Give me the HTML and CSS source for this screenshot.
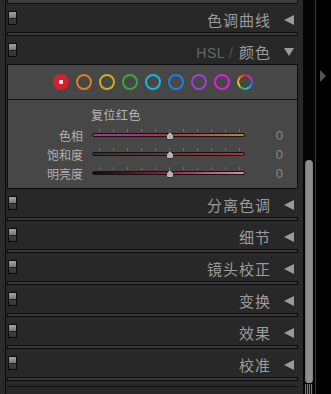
FILE: index.html
```html
<!doctype html>
<html lang="zh-CN">
  <head>
    <meta charset="UTF-8" />
    <title>修改照片 - 面板</title>
    <link rel="stylesheet" href="styles.css">
  </head>
  <body>
    <div class="app">
      <div class="panels">
        <div class="stub"></div>

        <section class="sec">
          <div class="hdr"><span class="switch"></span><span class="title">色调曲线</span><span class="tri"></span></div>
          <div class="bar"></div>
        </section>

        <!-- HSL / 颜色（展开） -->
        <section class="sec">
          <div class="hdr">
            <span class="switch"></span>
            <span class="title"><span class="dim">HSL</span><span class="slash">/</span>颜色</span>
            <span class="tri down"></span>
          </div>
          <div class="box">
            <div class="swatches">
              <span class="dot red active"></span>
              <span class="dot orange"></span>
              <span class="dot yellow"></span>
              <span class="dot green"></span>
              <span class="dot aqua"></span>
              <span class="dot blue"></span>
              <span class="dot purple"></span>
              <span class="dot magenta"></span>
              <span class="dot all"></span>
            </div>
            <div class="adjust">
              <div class="reset">复位红色</div>
              <div class="row">
                <span class="lbl">色相</span>
                <div class="slider">
                  <div class="ticks"></div>
                  <div class="track hue"></div>
                  <svg class="thumb" width="8" height="9" viewBox="0 0 8 9"><path d="M4 0.5 L7.5 4.5 L7.5 7 Q7.5 8.5 6 8.5 L2 8.5 Q0.5 8.5 0.5 7 L0.5 4.5 Z" fill="#b4b4b4" stroke="#222" stroke-width="0.8"/></svg>
                </div>
                <span class="val">0</span>
              </div>
              <div class="row">
                <span class="lbl">饱和度</span>
                <div class="slider">
                  <div class="ticks"></div>
                  <div class="track sat"></div>
                  <svg class="thumb" width="8" height="9" viewBox="0 0 8 9"><path d="M4 0.5 L7.5 4.5 L7.5 7 Q7.5 8.5 6 8.5 L2 8.5 Q0.5 8.5 0.5 7 L0.5 4.5 Z" fill="#b4b4b4" stroke="#222" stroke-width="0.8"/></svg>
                </div>
                <span class="val">0</span>
              </div>
              <div class="row">
                <span class="lbl">明亮度</span>
                <div class="slider">
                  <div class="ticks"></div>
                  <div class="track lum"></div>
                  <svg class="thumb" width="8" height="9" viewBox="0 0 8 9"><path d="M4 0.5 L7.5 4.5 L7.5 7 Q7.5 8.5 6 8.5 L2 8.5 Q0.5 8.5 0.5 7 L0.5 4.5 Z" fill="#b4b4b4" stroke="#222" stroke-width="0.8"/></svg>
                </div>
                <span class="val">0</span>
              </div>
            </div>
          </div>
        </section>

        <section class="sec">
          <div class="hdr"><span class="switch"></span><span class="title">分离色调</span><span class="tri"></span></div>
          <div class="bar"></div>
        </section>
        <section class="sec">
          <div class="hdr"><span class="switch"></span><span class="title">细节</span><span class="tri"></span></div>
          <div class="bar"></div>
        </section>
        <section class="sec">
          <div class="hdr"><span class="switch"></span><span class="title">镜头校正</span><span class="tri"></span></div>
          <div class="bar"></div>
        </section>
        <section class="sec">
          <div class="hdr"><span class="switch"></span><span class="title">变换</span><span class="tri"></span></div>
          <div class="bar"></div>
        </section>
        <section class="sec">
          <div class="hdr"><span class="switch"></span><span class="title">效果</span><span class="tri"></span></div>
          <div class="bar"></div>
        </section>
        <section class="sec">
          <div class="hdr"><span class="switch"></span><span class="title">校准</span><span class="tri"></span></div>
          <div class="bar"></div>
        </section>

        <div class="endline"></div>
      </div>

      <div class="scroll">
        <div class="thumbbar"></div>
        <div class="grip"></div>
      </div>

      <div class="rail"><span class="arrow"></span></div>
    </div>
  </body>
</html>
```

FILE: styles.css
```css
/* 右侧面板 331x394 */
body {
  margin: 0;
  background: #000;
  font-family: "Noto Sans CJK SC", "Liberation Sans", sans-serif;
}

.app {
  width: 331px;
  height: 394px;
  display: flex;
  overflow: hidden;
}

.panels {
  width: 303px;
  padding: 0 5px 0 7px;
  box-sizing: border-box;
  background: linear-gradient(to right, #2a2a2a 5px, #0c0c0c 5px, #0c0c0c 6px, #282828 6px);
}

.stub {
  height: 3px;
  background: #3c3c3c;
  border: 1px solid #101010;
  border-top: none;
}

/* 面板标题 */
.hdr {
  height: 28px;
  display: flex;
  align-items: center;
}

.switch {
  width: 7px;
  height: 12px;
  margin-left: 1px;
  border: 1px solid #0c0c0c;
  background: linear-gradient(#a2a2a2 0, #767676 6px, #1c1c1c 6px, #1c1c1c 7px, #3e3e3e 7px, #353535 100%);
}

.title {
  margin-left: auto;
  margin-top: 4px;
  font-size: 15px;
  line-height: 20px;
  letter-spacing: 1px;
  color: #9c9c9c;
}

.title .dim {
  font-family: "Liberation Sans", sans-serif;
  font-size: 14px;
  letter-spacing: 0.5px;
  color: #676767;
}

.title .slash {
  margin: 0 5px 0 4px;
  font-family: "Liberation Sans", sans-serif;
  font-size: 14px;
  color: #555;
}

.tri {
  width: 0;
  height: 0;
  margin: 3px 4px 0 13px;
  border-top: 5px solid transparent;
  border-bottom: 5px solid transparent;
  border-right: 10px solid #9a9a9a;
}

.tri.down {
  border-top: 8px solid #9a9a9a;
  border-left: 5px solid transparent;
  border-right: 5px solid transparent;
  border-bottom: none;
}

.bar {
  height: 2px;
  background: #363636;
  border: 1px solid #0e0e0e;
}

/* HSL 展开内容 */
.box {
  background: #474747;
  border: 1px solid #0e0e0e;
}

.swatches {
  height: 34px;
  display: flex;
  align-items: center;
  justify-content: center;
  gap: 7px;
  border-bottom: 1px solid #121212;
}

.dot {
  width: 12px;
  height: 12px;
  border-radius: 50%;
  border: 2px solid;
}

.dot.red { border-color: #d22232; }
.dot.orange { border-color: #d97f2c; }
.dot.yellow { border-color: #d1ac22; }
.dot.green { border-color: #36a83a; }
.dot.aqua { border-color: #1ab8d4; }
.dot.blue { border-color: #1e7ee8; }
.dot.purple { border-color: #9b42d2; }
.dot.magenta { border-color: #e01ee0; }

.dot.active {
  background: radial-gradient(circle, #fff 0 2px, #d22232 2.5px);
}

.dot.all {
  border: none;
  width: 16px;
  height: 16px;
  background: conic-gradient(#e02424, #e020d8, #2a62ee, #1ec2e0, #34b038, #e0d422, #e4821e, #e02424);
  -webkit-mask: radial-gradient(circle, transparent 5.5px, #000 6px);
  mask: radial-gradient(circle, transparent 5.5px, #000 6px);
}

.adjust {
  padding: 8px 0 5px;
}

.reset {
  padding-left: 83px;
  font-size: 12px;
  line-height: 14px;
  letter-spacing: 0.5px;
  color: #b8b8b8;
  margin-bottom: 4px;
}

.row {
  display: grid;
  grid-template-columns: 84px 153px 38px;
  height: 19px;
  align-items: center;
}

.lbl {
  text-align: right;
  padding-right: 9px;
  font-size: 12px;
  line-height: 14px;
  color: #b0b0b0;
}

.slider {
  position: relative;
  height: 19px;
  padding-top: 3px;
  box-sizing: border-box;
}

.ticks {
  width: 148px;
  height: 3px;
  margin-bottom: 1px;
  background: repeating-linear-gradient(to right, transparent 0 7px, #6e6e6e 7px 8px, transparent 8px 14px);
}

.track {
  height: 2px;
  border: 1px solid #141414;
  border-radius: 2px;
}

.track.hue { background: linear-gradient(to right, #a03c84, #b0304a 50%, #b28638); }
.track.sat { background: linear-gradient(to right, #363232, #5a3636 40%, #b0303a); }
.track.lum { background: linear-gradient(to right, #100c0c, #8e2a32 50%, #d89292); }

.thumb {
  position: absolute;
  top: 5px;
  left: 74px;
}

.val {
  text-align: right;
  font-family: "Liberation Sans", sans-serif;
  font-size: 13px;
  color: #888;
}

.endline {
  height: 1px;
  margin-top: 5px;
  background: #111;
}

/* 滚动条 */
.scroll {
  width: 13px;
  padding: 160px 2px 0;
  box-sizing: border-box;
  display: flex;
  flex-direction: column;
  background: #050505;
  border-right: 1px solid #3a3a3a;
}

.thumbbar {
  height: 223px;
  background: linear-gradient(to right, #6e6e6e, #8e8e8e 2px, #8e8e8e 7px, #6e6e6e);
  border-radius: 4px 4px 3px 3px;
}

.grip {
  height: 10px;
  margin-top: 1px;
  background: repeating-linear-gradient(to right, #7a7a7a 0 1px, #111 1px 2px);
}

.rail {
  flex: 1;
  padding: 70px 0 0 4px;
  background: #000;
}

.arrow {
  display: block;
  width: 0;
  height: 0;
  border-top: 6px solid transparent;
  border-bottom: 6px solid transparent;
  border-left: 6px solid #555;
}
```
